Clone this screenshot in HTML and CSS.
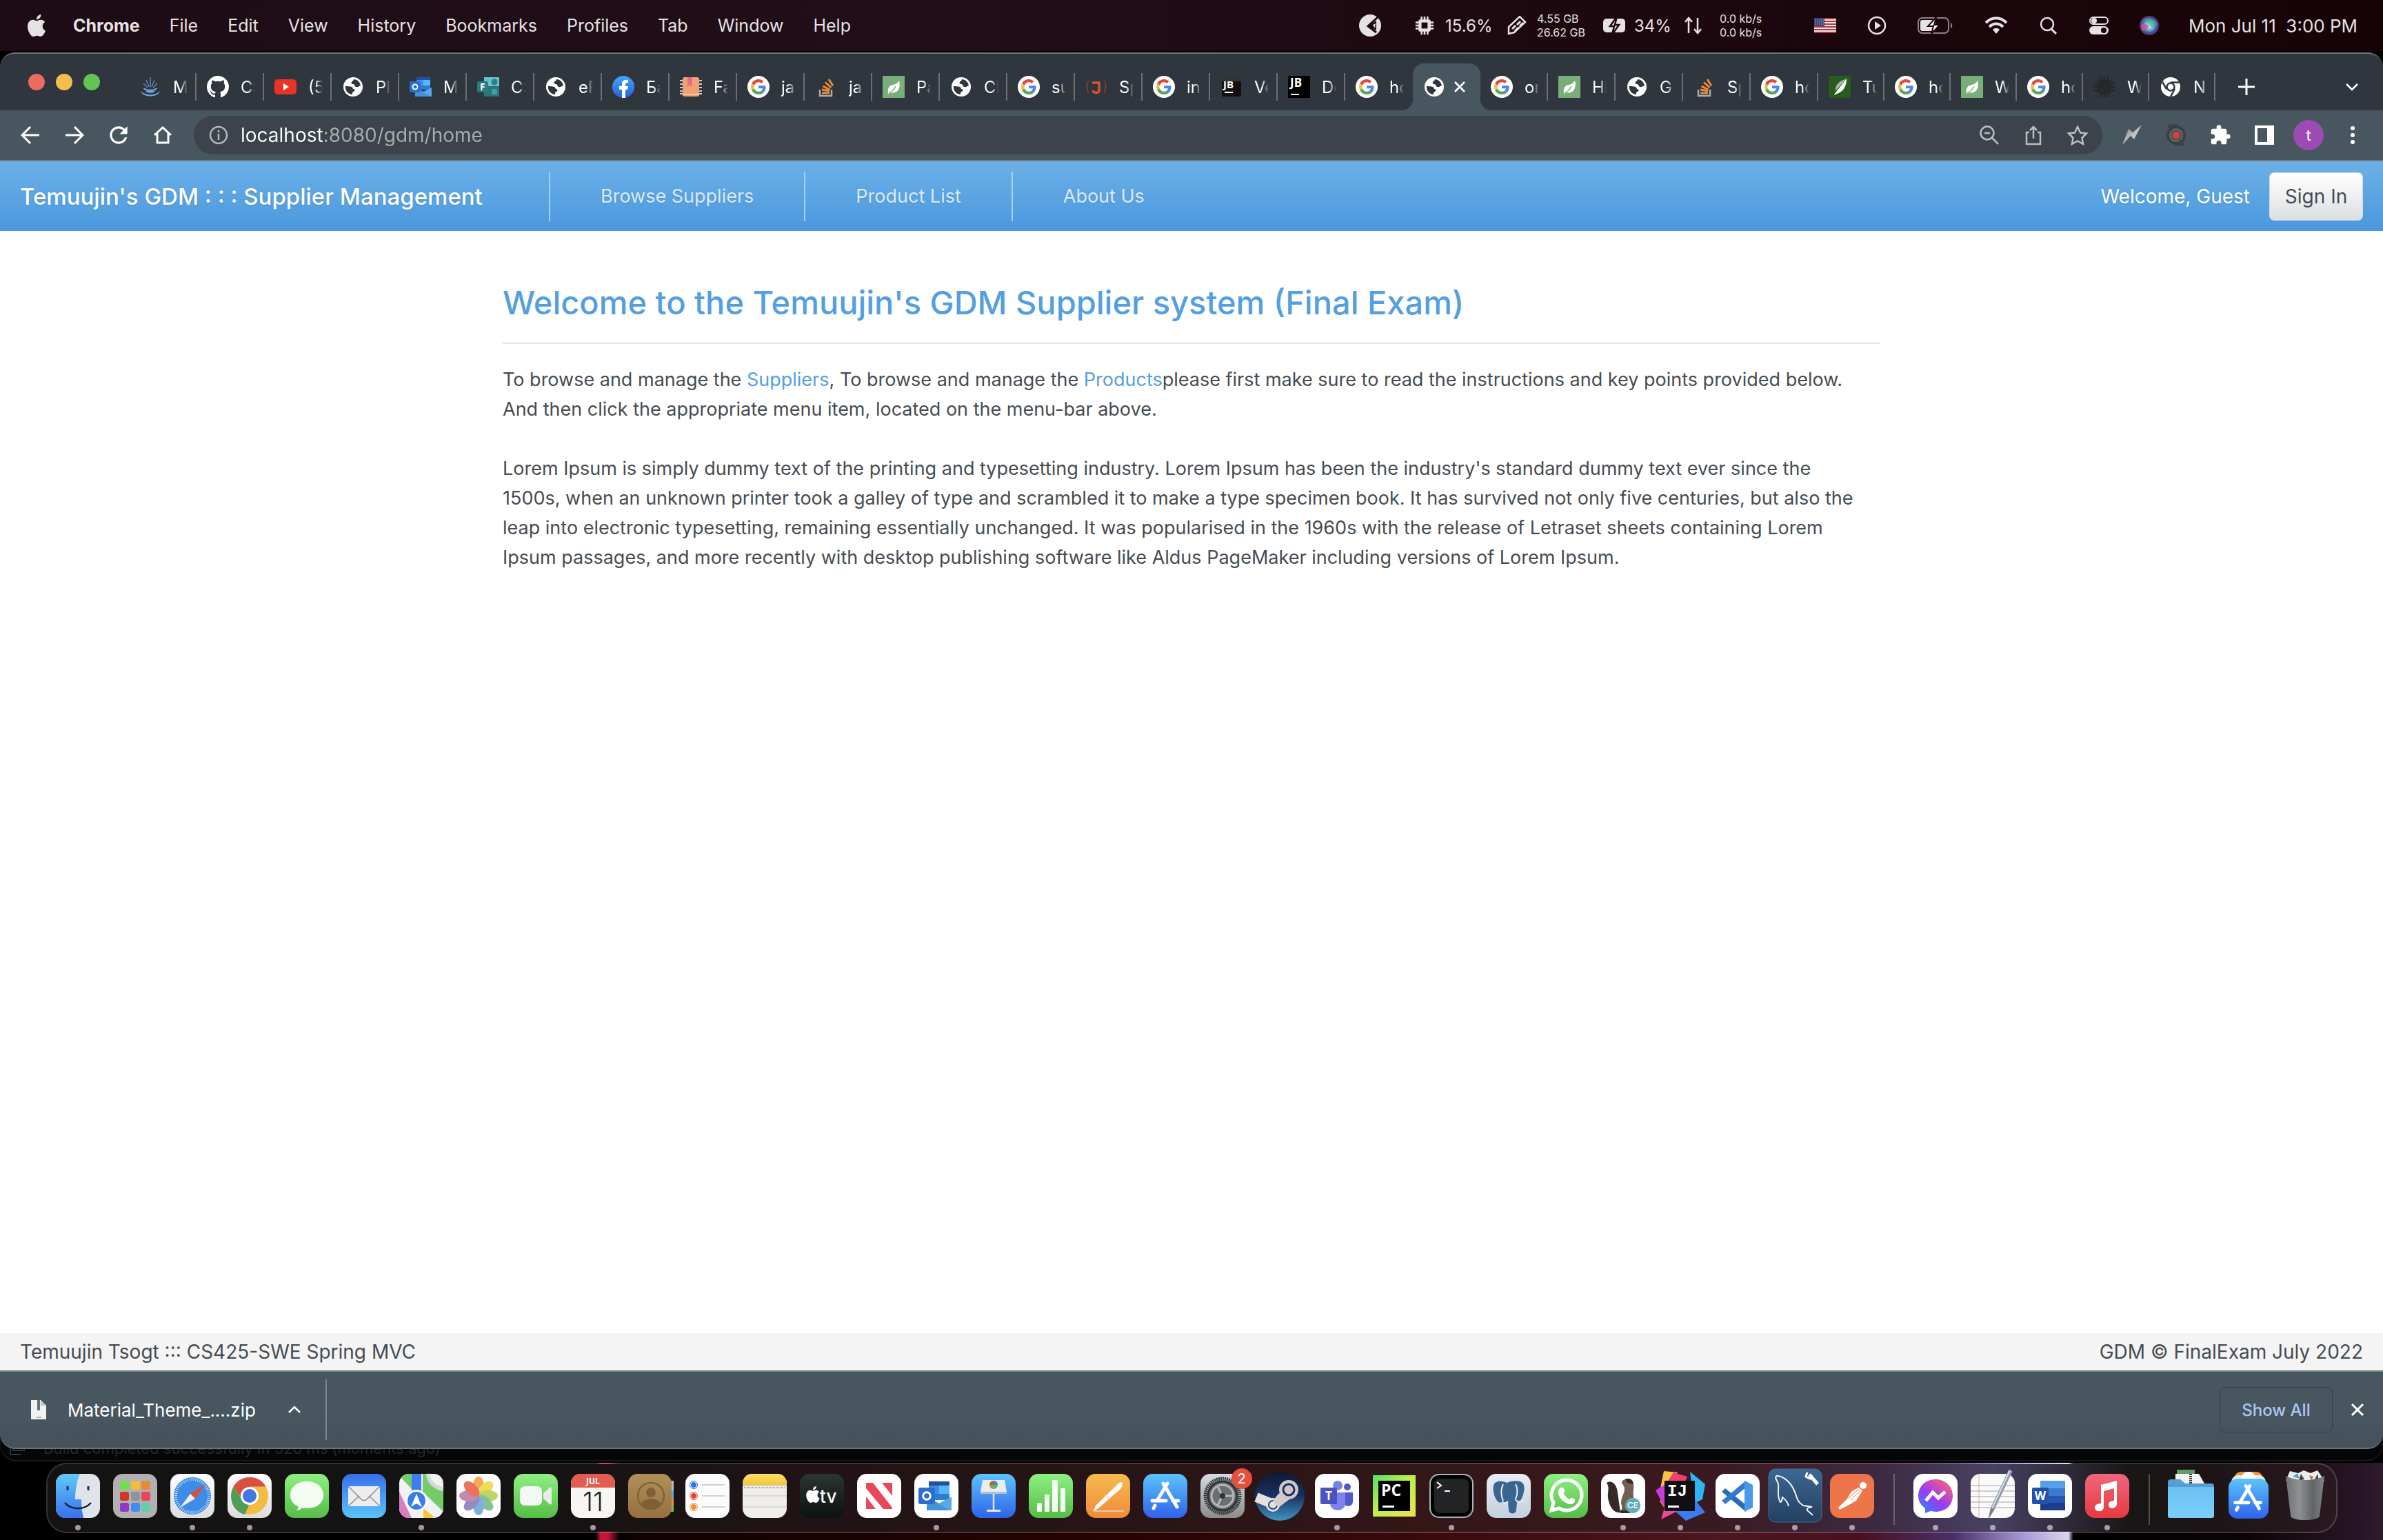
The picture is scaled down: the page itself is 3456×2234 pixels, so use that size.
FILE: index.html
```html
<!DOCTYPE html>
<html lang="en">
<head>
<meta charset="utf-8">
<title>GDM Supplier Management</title>
<link rel="stylesheet" href="styles.css">
</head>
<body>
<svg class="defs" aria-hidden="true">
  <defs>
    <linearGradient id="g-green" x2="0" y2="1"><stop stop-color="#8ef082"/><stop offset="1" stop-color="#55bd47"/></linearGradient>
    <linearGradient id="g-blue" x2="0" y2="1"><stop stop-color="#5cc4fb"/><stop offset="1" stop-color="#2f62ea"/></linearGradient>
    <linearGradient id="g-mail" x2="0" y2="1"><stop stop-color="#3870ea"/><stop offset="1" stop-color="#5ac3f8"/></linearGradient>
    <linearGradient id="g-white" x2="0" y2="1"><stop stop-color="#fff"/><stop offset="1" stop-color="#dcdcdc"/></linearGradient>
    <linearGradient id="g-orange" x2="0" y2="1"><stop stop-color="#f6bb4d"/><stop offset="1" stop-color="#ef8b3a"/></linearGradient>
    <linearGradient id="g-red" x2="0" y2="1"><stop stop-color="#f0667c"/><stop offset="1" stop-color="#e63a3e"/></linearGradient>
    <linearGradient id="g-yellow" x2="0" y2="1"><stop stop-color="#fbe06c"/><stop offset="1" stop-color="#f5c533"/></linearGradient>
    <linearGradient id="g-finder" x2="0" y2="1"><stop stop-color="#5fcaf8"/><stop offset="1" stop-color="#3a6ff0"/></linearGradient>
    <linearGradient id="g-brown" x2="0" y2="1"><stop stop-color="#b09059"/><stop offset="1" stop-color="#97703f"/></linearGradient>
    <linearGradient id="g-tv" x2="0" y2="1"><stop stop-color="#2b3632"/><stop offset="1" stop-color="#0c1012"/></linearGradient>
    <linearGradient id="g-grey" x2="0" y2="1"><stop stop-color="#d3dde2"/><stop offset="1" stop-color="#8d8c8a"/></linearGradient>
    <linearGradient id="g-steam" x2="0" y2="1"><stop stop-color="#10192b"/><stop offset=".5" stop-color="#183163"/><stop offset="1" stop-color="#4194c0"/></linearGradient>
    <linearGradient id="g-pc" x2="1" y2="1"><stop stop-color="#52e06a"/><stop offset=".45" stop-color="#b9f04c"/><stop offset="1" stop-color="#f0e050"/></linearGradient>
    <linearGradient id="g-pg" x2="0" y2="1"><stop stop-color="#e9edf2"/><stop offset="1" stop-color="#c3d0de"/></linearGradient>
    <linearGradient id="g-mysql" x2="0" y2="1"><stop stop-color="#3c6796"/><stop offset="1" stop-color="#23405e"/></linearGradient>
    <linearGradient id="g-msgr" x1="0" y1="1" x2=".8" y2="0"><stop stop-color="#1f8dff"/><stop offset=".5" stop-color="#9a3bf5"/><stop offset="1" stop-color="#f9617a"/></linearGradient>
    <linearGradient id="g-trash"><stop stop-color="#6e7274"/><stop offset=".35" stop-color="#8d9192"/><stop offset=".7" stop-color="#5f6466"/><stop offset="1" stop-color="#808486"/></linearGradient>
    <linearGradient id="g-folder" x2="0" y2="1"><stop stop-color="#6cc1f2"/><stop offset="1" stop-color="#7ccdfb"/></linearGradient>
    <linearGradient id="g-fb" x2="0" y2="1"><stop stop-color="#42a5f8"/><stop offset="1" stop-color="#2960dd"/></linearGradient>
    <linearGradient id="g-bolt" x2="1" y2="1"><stop stop-color="#777"/><stop offset=".6" stop-color="#c8c8c8"/><stop offset="1" stop-color="#777"/></linearGradient>
    <radialGradient id="g-siri"><stop stop-color="#f0fbff"/><stop offset=".45" stop-color="#65b8d8"/><stop offset=".8" stop-color="#3b4d92"/><stop offset="1" stop-color="#6d2b66"/></radialGradient>
  </defs>
  <symbol id="google" viewBox="0 0 32 32"><circle cx="16" cy="16" r="16" fill="#fff"/><g transform="translate(5 5) scale(.46)"><path fill="#dd4b3e" d="M24 9.500c3.540 0 6.710 1.220 9.210 3.600l6.850-6.850C35.900 2.380 30.470 0 24 0 14.620 0 6.510 5.380 2.560 13.220l7.980 6.190C12.430 13.720 17.740 9.500 24 9.500z"/><path fill="#5086ec" d="M46.980 24.550c0-1.570-.15-3.090-.38-4.550H24v9.020h12.940c-.58 2.960-2.260 5.480-4.780 7.180l7.730 6c4.510-4.180 7.090-10.360 7.090-17.650z"/><path fill="#f2bd42" d="M10.530 28.590c-.48-1.450-.76-2.990-.76-4.590s.27-3.140.76-4.590l-7.980-6.190C.92 16.460 0 20.120 0 24c0 3.880.92 7.540 2.560 10.780l7.970-6.190z"/><path fill="#58a65c" d="M24 48c6.480 0 11.930-2.130 15.890-5.810l-7.730-6c-2.150 1.450-4.920 2.300-8.160 2.300-6.260 0-11.570-4.220-13.470-9.910l-7.980 6.190C6.510 42.620 14.620 48 24 48z"/></g></symbol>
  <symbol id="globe" viewBox="0 0 32 32"><circle cx="16" cy="16" r="14" fill="#fff"/><path fill="#2f363d" d="M17 5c5 0 9 4 10 9-3 1-4 3-7 2-2-1-1-4-4-4-2 0-3-1-2-3 0-2 3-1 3-4zM5 15c3 0 6 0 9 1 2 1 1 3 3 3 2 1 2 3 0 4-2 0-2 2-2 4C9 27 4 21 5 15z"/></symbol>
  <symbol id="stack" viewBox="0 0 32 32"><path fill="none" stroke="#a7abb0" stroke-width="2.500" d="M7 20v9h17v-9"/><path stroke="#e98b3a" stroke-width="3" fill="none" d="M10 25h11M10 20l11 2M11.500 15l10 5M15 9.500l8.500 7.500M20 5l6 9.500"/></symbol>
  <symbol id="spring" viewBox="0 0 32 32"><path fill="#77ae7a" d="M0 0h32v32H0z"/><path fill="#fff" d="M24 7c2 8 0 15-6 17-3 1-6 0-7 1l-3 1c-1-8 1-12 8-13 4-1 6-3 8-6z"/><path d="M9 25c5-2 8-6 10-10" stroke="#77ae7a" stroke-width="1.500" fill="none"/></symbol>
  <symbol id="outlook" viewBox="0 0 32 32"><path fill="#2450a0" d="M10 2h20v9H10z"/><path fill="#3b8ee4" d="M10 6h10v14H10z"/><path fill="#55b8f8" d="M20 6h10v8H20z"/><path fill="#2f7bd0" d="M10 14h20v6H10z"/><path fill="#56a8e8" d="M8 17l12 6 12-6v13H8z"/><path fill="#4592dc" d="M8 17l22 13H8z"/><rect y="8" width="16" height="16" rx="2" fill="#2c6dd0"/><circle cx="8" cy="16" r="3.500" fill="none" stroke="#fff" stroke-width="2"/></symbol>
  <symbol id="chip" viewBox="0 0 32 32"><rect x="6" y="6" width="20" height="20" rx="3" fill="currentColor"/><path stroke="currentColor" stroke-width="3" d="M11 1v30M16 1v30M21 1v30M1 11h30M1 16h30M1 21h30"/></symbol>
  <symbol id="appstore-a" viewBox="0 0 64 64"><g stroke="#fff" stroke-width="5" stroke-linecap="round"><path d="M35 14L20 39M29 14l20 34M13 39h20M43 39h8M17 46l-2 4"/></g></symbol>
  <symbol id="apple" viewBox="0 0 24 24"><path fill="currentColor" d="M12.152 6.896c-.948 0-2.415-1.078-3.960-1.040-2.040.027-3.910 1.183-4.961 3.014-2.117 3.675-.546 9.103 1.519 12.090 1.013 1.454 2.208 3.090 3.792 3.039 1.520-.065 2.090-.987 3.935-.987 1.831 0 2.350.987 3.960.948 1.637-.026 2.676-1.480 3.676-2.948 1.156-1.688 1.636-3.325 1.662-3.415-.039-.013-3.182-1.221-3.220-4.857-.026-3.040 2.480-4.494 2.597-4.559-1.429-2.090-3.623-2.324-4.390-2.376-2-.156-3.675 1.090-4.610 1.090zM15.530 3.830c.843-1.012 1.400-2.427 1.245-3.830-1.207.052-2.662.805-3.532 1.818-.78.896-1.454 2.338-1.273 3.714 1.338.104 2.715-.688 3.559-1.701"/></symbol>
</svg>

<header class="menubar">
  <nav class="menus" aria-label="Menu bar">
    <button class="menu-apple" aria-label="Apple menu"><svg width="32" height="32"><use href="#apple"/></svg></button>
    <button class="menu menu-app">Chrome</button>
    <button class="menu">File</button>
    <button class="menu">Edit</button>
    <button class="menu">View</button>
    <button class="menu">History</button>
    <button class="menu">Bookmarks</button>
    <button class="menu">Profiles</button>
    <button class="menu">Tab</button>
    <button class="menu">Window</button>
    <button class="menu">Help</button>
  </nav>
  <div class="status">
    <svg width="32" height="32" viewBox="0 0 32 32"><circle cx="16" cy="16" r="16" fill="#e6e1e3"/><path d="M27 4L13 17l12 9M22 13l-2 7" stroke="#1d0a12" stroke-width="3" fill="none"/><path d="M13 17l12-8v14z" fill="#1d0a12"/><path d="M20 15l4-2-1 7z" fill="#e6e1e3"/></svg>
    <div class="metrics">
      <div class="metric"><svg width="30" height="28" viewBox="0 0 32 32"><use href="#chip"/><rect x="11" y="11" width="10" height="10" fill="#1d0a12"/></svg><span class="metric-value">15.6%</span></div>
      <div class="metric"><svg width="28" height="28" viewBox="0 0 28 28"><path d="M2 26V16L18 1l8 8L10 24z" fill="#1d0a12" stroke="#e6e1e3" stroke-width="2.500"/><path d="M7 19l5-5M14 13l5-5M11 22l5-5M18 15l5-5" stroke="#e6e1e3" stroke-width="3"/></svg><span class="metric-pair metric-ram"><span>4.55 GB</span><span>26.62 GB</span></span></div>
      <div class="metric metric-tight"><svg width="34" height="24" viewBox="0 0 34 24"><rect x="1" y="2" width="32" height="20" rx="5" fill="#e6e1e3"/><path d="M21-1L11 13h6l-3 12 10-14h-6z" fill="#e6e1e3" stroke="#1d0a12" stroke-width="2.500"/></svg><span class="metric-value">34%</span></div>
      <div class="metric metric-net"><svg width="27" height="26" viewBox="0 0 27 26"><path d="M7 24V3M2 8l5-6 5 6M20 2v21M15 18l5 6 5-6" stroke="#e6e1e3" stroke-width="2.500" fill="none"/></svg><span class="metric-pair"><span>0.0 kb/s</span><span>0.0 kb/s</span></span></div>
    </div>
    <div class="tray">
      <svg width="32" height="22" viewBox="0 0 32 22"><path fill="#ece8ea" d="M0 0h32v22H0z"/><path stroke="#b33a43" stroke-width="2" d="M0 1h32M0 5h32M0 9h32M0 13h32M0 17h32M0 21h32"/><path fill="#3c4576" d="M0 0h15v12H0z"/><path stroke="#b9bdd0" stroke-dasharray="1 2" d="M1 3h13M1 6h13M1 9h13"/></svg>
      <svg width="28" height="28" viewBox="0 0 28 28"><circle cx="14" cy="14" r="12" fill="none" stroke="#e6e1e3" stroke-width="2.500"/><path fill="#e6e1e3" d="M11 8l9 6-9 6z"/></svg>
      <svg width="52" height="26" viewBox="0 0 52 26"><rect x="1" y="2" width="44" height="22" rx="6" fill="none" stroke="#8c8386" stroke-width="2"/><path d="M48 9v8c3-1 3-7 0-8z" fill="#8c8386"/><rect x="4" y="5" width="22" height="16" rx="3" fill="#e6e1e3"/><path d="M27 1L15 14h8l-3 11 12-13h-8z" fill="#fff" stroke="#1a060b" stroke-width="2"/></svg>
      <svg width="34" height="26" viewBox="0 0 34 26"><path d="M2 9c9-9 21-9 30 0M7 15c6-6 14-6 20 0" stroke="#e6e1e3" stroke-width="4" fill="none"/><path d="M17 25l-5-6c3-3 7-3 10 0z" fill="#e6e1e3"/></svg>
      <svg width="28" height="28" viewBox="0 0 28 28"><circle cx="12" cy="12" r="9" fill="none" stroke="#e6e1e3" stroke-width="2.500"/><path d="M18 19l7 7" stroke="#e6e1e3" stroke-width="3"/></svg>
      <svg width="28" height="28" viewBox="0 0 28 28"><rect x="1" y="2" width="26" height="10" rx="5" fill="none" stroke="#e6e1e3" stroke-width="2"/><circle cx="7" cy="7" r="4" fill="#e6e1e3"/><rect y="15" width="28" height="12" rx="6" fill="#e6e1e3"/><circle cx="21" cy="21" r="4" fill="#1a060b"/></svg>
      <svg width="28" height="28" viewBox="0 0 28 28"><circle cx="14" cy="14" r="14" fill="url(#g-siri)"/><path d="M2 12c5-9 8-2 12 2s9 4 12-2C24 3 4-2 2 12z" fill="#3fae93" opacity=".6"/><path d="M2 14c3-4 8-2 12 0-2 5-6 8-9 8-2-2-3-5-3-8z" fill="#d6508e" opacity=".8"/></svg>
      <time class="clock">Mon Jul 11&nbsp; 3:00 PM</time>
    </div>
  </div>
</header>

<div class="browser">
  <div class="tabstrip">
    <div class="lights"><button class="light close" aria-label="Close"></button><button class="light minimise" aria-label="Minimise"></button><button class="light zoom" aria-label="Zoom"></button></div>
    <div class="tabs">
      <button class="tab"><svg class="fav" viewBox="0 0 32 32"><path d="M16 2v14M10 6l4 10M22 6l-4 10M6 11l6 6M26 11l-6 6" stroke="#5a88b8" stroke-width="1.500"/><path d="M7 18c2 4 16 4 18 0M10 22c3 2 9 2 12 0" stroke="#6ea4e0" stroke-width="2.500" fill="none"/><path d="M2 22c2 10 26 10 28 0-6 7-22 7-28 0z" fill="#6ea4e0"/></svg><span>M</span></button>
      <button class="tab"><svg class="fav" viewBox="0 0 16 16"><path fill="#fff" d="M8 0C3.580 0 0 3.580 0 8c0 3.540 2.290 6.530 5.470 7.590.4.070.55-.17.55-.38 0-.19-.01-.82-.01-1.490-2.010.37-2.530-.49-2.690-.94-.09-.23-.48-.94-.82-1.130-.28-.15-.68-.52-.01-.53.63-.01 1.080.58 1.230.82.72 1.210 1.870.87 2.330.66.070-.52.28-.87.51-1.070-1.780-.2-3.640-.89-3.640-3.950 0-.87.31-1.590.82-2.150-.08-.2-.36-1.020.080-2.120 0 0 .67-.21 2.200.82.64-.18 1.320-.27 2-.27s1.360.090 2 .27c1.530-1.040 2.200-.82 2.200-.82.44 1.100.16 1.920.080 2.120.51.56.82 1.270.82 2.150 0 3.070-1.870 3.750-3.650 3.950.29.25.54.73.54 1.480 0 1.070-.01 1.930-.01 2.200 0 .21.15.46.55.38A8.010 8.010 0 0 0 16 8c0-4.420-3.580-8-8-8z"/></svg><span>CS</span></button>
      <button class="tab"><svg class="fav" viewBox="0 0 32 32"><rect y="5" width="32" height="22" rx="5" fill="#e93323"/><path fill="#fff" d="M13 11l8 5-8 5z"/></svg><span>(5</span></button>
      <button class="tab"><svg class="fav"><use href="#globe"/></svg><span>Pl</span></button>
      <button class="tab"><svg class="fav"><use href="#outlook"/></svg><span>M</span></button>
      <button class="tab"><svg class="fav" viewBox="0 0 32 32"><path fill="#2f7377" d="M10 2h22v28H10z"/><path fill="#64c3cf" d="M10 2h22v13H10z"/><circle cx="25" cy="9" r="4.500" fill="#2f7e86"/><path fill="#3fa0a4" d="M21 19h8v8h-8z"/><rect y="8" width="16" height="16" rx="2" fill="#2a7b80"/><text x="4" y="21" class="glyph" font-size="14" fill="#fff">F</text></svg><span>CS</span></button>
      <button class="tab"><svg class="fav"><use href="#globe"/></svg><span>eR</span></button>
      <button class="tab"><svg class="fav" viewBox="0 0 32 32"><circle cx="16" cy="16" r="16" fill="url(#g-fb)"/><path fill="#fff" d="M14 32V20h-4v-5h4v-3c0-5 3-7 9-6v4c-4 0-4 1-4 5h4l-1 5h-3v12z"/></svg><span>Ба</span></button>
      <button class="tab"><svg class="fav" viewBox="0 0 32 32"><path stroke="#fff" stroke-width="1.500" d="M0 7h32M0 12h32M0 17h32M0 22h32M0 26h32"/><rect x="4" y="2" width="24" height="28" rx="3" fill="#f0a071"/><path fill="#e46c8c" d="M11 2h7v14l-4-3-3 3z"/><path fill="#f5cf8e" d="M4 26h24v2H4z"/></svg><span>Fa</span></button>
      <button class="tab"><svg class="fav"><use href="#google"/></svg><span>ja</span></button>
      <button class="tab"><svg class="fav"><use href="#stack"/></svg><span>ja</span></button>
      <button class="tab"><svg class="fav"><use href="#spring"/></svg><span>Pa</span></button>
      <button class="tab"><svg class="fav"><use href="#globe"/></svg><span>Cl</span></button>
      <button class="tab"><svg class="fav"><use href="#google"/></svg><span>su</span></button>
      <button class="tab"><svg class="fav" viewBox="0 0 32 32"><path d="M5 8c-3 0-1 6-3 8 2 2 0 8 3 8M27 8c3 0 1 6 3 8-2 2 0 8-3 8" stroke="#8a4238" stroke-width="1.500" fill="none"/><path d="M10 10h10v12c0 3-8 4-9-1" stroke="#d9532c" stroke-width="3.500" fill="none"/></svg><span>Sp</span></button>
      <button class="tab"><svg class="fav"><use href="#google"/></svg><span>in</span></button>
      <button class="tab"><svg class="fav" viewBox="0 0 32 32"><path fill="#111" d="M2 2h28v28H2z"/><path fill="#333" d="M2 2h28v6H2z"/><text x="4" y="18" class="glyph" font-size="15" fill="#fff">JB</text><path fill="#fff" d="M6 23h12v2H6z"/></svg><span>Ve</span></button>
      <button class="tab"><svg class="fav" viewBox="0 0 32 32"><path d="M0 0h32v32H0z"/><text x="3" y="16" class="glyph" font-size="17" fill="#fff">JB</text><path fill="#fff" d="M4 26h12v2H4z"/></svg><span>Do</span></button>
      <button class="tab tab-before"><svg class="fav"><use href="#google"/></svg><span>ho</span></button>
      <button class="tab tab-active" aria-label="GDM"><svg class="fav"><use href="#globe"/></svg><svg width="20" height="20" viewBox="0 0 20 20"><path d="M3 3l14 14M17 3L3 17" stroke="#fff" stroke-width="2.500"/></svg></button>
      <button class="tab"><svg class="fav"><use href="#google"/></svg><span>or</span></button>
      <button class="tab"><svg class="fav"><use href="#spring"/></svg><span>Hi</span></button>
      <button class="tab"><svg class="fav"><use href="#globe"/></svg><span>G</span></button>
      <button class="tab"><svg class="fav"><use href="#stack"/></svg><span>Sp</span></button>
      <button class="tab"><svg class="fav"><use href="#google"/></svg><span>ho</span></button>
      <button class="tab tab-slim"><svg class="fav" viewBox="0 0 32 32"><rect width="32" height="32" rx="3" fill="#285c1e"/><path fill="#fff" d="M26 4c0 12-5 19-14 22l-4 2c1-3 2-4 4-6z"/><path fill="#a9b8a4" d="M26 4C16 8 9 12 10 22z"/></svg><span>Tu</span></button>
      <button class="tab tab-slim"><svg class="fav"><use href="#google"/></svg><span>ho</span></button>
      <button class="tab tab-slim"><svg class="fav"><use href="#spring"/></svg><span>W</span></button>
      <button class="tab tab-slim"><svg class="fav"><use href="#google"/></svg><span>ho</span></button>
      <button class="tab tab-slim"><svg class="fav fav-dark"><use href="#chip"/></svg><span>W</span></button>
      <button class="tab tab-slim"><svg class="fav" viewBox="0 0 32 32"><circle cx="16" cy="16" r="14" fill="#fff"/><circle cx="16" cy="16" r="5.500" fill="#fff" stroke="#2f363d" stroke-width="2.500"/><path d="M16 9.500h13M10 19L4 9M22 19l-6 11" stroke="#2f363d" stroke-width="2.500"/></svg><span>N</span></button>
    </div>
    <button class="newtab" aria-label="New tab"><svg width="26" height="26" viewBox="0 0 26 26"><path d="M13 1v24M1 13h24" stroke="#fff" stroke-width="3"/></svg></button>
    <button class="tabsearch" aria-label="Search tabs"><svg width="20" height="12" viewBox="0 0 20 12"><path d="M2 2l8 8 8-8" stroke="#fff" stroke-width="2.500" fill="none"/></svg></button>
  </div>

  <div class="toolbar">
    <div class="navbuttons">
      <button class="tool" aria-label="Back"><svg width="28" height="28" viewBox="0 0 28 28"><path d="M27 14H3M14 2L2 14l12 12" stroke="#fff" stroke-width="3" fill="none"/></svg></button>
      <button class="tool" aria-label="Forward"><svg width="28" height="28" viewBox="0 0 28 28"><path d="M1 14h24M14 2l12 12-12 12" stroke="#fff" stroke-width="3" fill="none"/></svg></button>
      <button class="tool" aria-label="Reload"><svg width="38" height="38" viewBox="0 0 24 24"><path fill="#fff" d="M17.650 6.350A7.958 7.958 0 0 0 12 4c-4.420 0-7.990 3.580-7.990 8s3.570 8 7.990 8c3.730 0 6.840-2.550 7.730-6h-2.080A5.990 5.990 0 0 1 12 18c-3.310 0-6-2.690-6-6s2.690-6 6-6c1.660 0 3.140.69 4.220 1.780L13 11h7V4l-2.350 2.350z"/></svg></button>
      <button class="tool" aria-label="Home"><svg width="28" height="28" viewBox="0 0 28 28"><path d="M2 14L14 3l12 11M6 11v14h16V11" stroke="#fff" stroke-width="3" fill="none"/></svg></button>
    </div>
    <div class="omnibox">
      <svg width="28" height="28" viewBox="0 0 28 28"><circle cx="14" cy="14" r="12" fill="none" stroke="#b4b8ba" stroke-width="2.500"/><path d="M14 12v9M14 7v3" stroke="#b4b8ba" stroke-width="2.500"/></svg>
      <input class="url" type="text" aria-label="Address" value="localhost:8080/gdm/home">
      <button class="tool" aria-label="Zoom"><svg width="30" height="30" viewBox="0 0 30 30"><circle cx="12" cy="12" r="9.500" fill="none" stroke="#bcbfc1" stroke-width="2.500"/><path d="M8 12h8M19 19l9 9" stroke="#bcbfc1" stroke-width="2.500"/></svg></button>
      <button class="tool" aria-label="Share"><svg width="30" height="30" viewBox="0 0 30 30"><path d="M9 11H5v17h20V11h-4M15 20V3M10 8l5-5 5 5" stroke="#bcbfc1" stroke-width="2.500" fill="none"/></svg></button>
      <button class="tool" aria-label="Bookmark"><svg width="32" height="32" viewBox="0 0 32 32"><path d="M16 4l4 8.500 9 1-6.500 6.500 1.500 9-8-4.500L8 29l1.500-9L3 13.500l9-1z" stroke="#bcbfc1" stroke-width="2.500" fill="none"/></svg></button>
    </div>
    <div class="extensions">
      <button class="tool" aria-label="Extension"><svg width="30" height="30" viewBox="0 0 30 30"><path d="M29 0L18 21l-5-5L1 29 10 6l6 5z" fill="url(#g-bolt)"/></svg></button>
      <button class="tool" aria-label="Recorder"><svg width="32" height="32" viewBox="0 0 32 32"><circle cx="16" cy="16" r="12" fill="none" stroke="#3d3f40" stroke-width="4"/><circle cx="16" cy="16" r="9" fill="none" stroke="#6c6f70" stroke-width="1.500"/><path d="M5 2h13M14 30h13M5 3l5 6M27 30l-6-7" stroke="#3d3f40" stroke-width="3"/><circle cx="16" cy="16" r="5" fill="#e9392a"/></svg></button>
      <button class="tool" aria-label="Extensions"><svg width="32" height="32" viewBox="0 0 24 24"><path fill="#fff" d="M20.500 11H19V7c0-1.100-.9-2-2-2h-4V3.500a2.500 2.500 0 0 0-5 0V5H4c-1.100 0-1.990.9-1.990 2v3.800H3.500c1.490 0 2.700 1.210 2.700 2.700s-1.210 2.700-2.700 2.700H2V20c0 1.100.9 2 2 2h3.800v-1.500c0-1.490 1.210-2.700 2.700-2.700s2.700 1.210 2.700 2.700V22H17c1.100 0 2-.9 2-2v-4h1.500a2.500 2.500 0 0 0 0-5z"/></svg></button>
      <button class="tool" aria-label="Side panel"><svg width="28" height="28" viewBox="0 0 28 28"><path fill="#fff" fill-rule="evenodd" d="M0 0h28v28H0zM4 4v20h14V4z"/></svg></button>
      <button class="tool avatar" aria-label="Profile">t</button>
      <button class="tool" aria-label="More"><svg width="8" height="28" viewBox="0 0 8 28"><g fill="#fff"><circle cx="4" cy="4" r="3"/><circle cx="4" cy="14" r="3"/><circle cx="4" cy="24" r="3"/></g></svg></button>
    </div>
  </div>

  <div class="page">
    <header class="site-nav">
      <a class="brand" href="#">Temuujin's GDM : : : Supplier Management</a>
      <nav class="site-menu" aria-label="Site">
        <a href="#">Browse Suppliers</a>
        <a href="#">Product List</a>
        <a href="#">About Us</a>
      </nav>
      <div class="account"><span>Welcome, Guest</span><button class="signin">Sign In</button></div>
    </header>
    <main class="content">
      <h1>Welcome to the Temuujin's GDM Supplier system (Final Exam)</h1>
      <p>To browse and manage the <a href="#">Suppliers</a>, To browse and manage the <a href="#">Products</a>please first make sure to read the instructions and key points provided below.<br>And then click the appropriate menu item, located on the menu-bar above.</p>
      <p>Lorem Ipsum is simply dummy text of the printing and typesetting industry. Lorem Ipsum has been the industry's standard dummy text ever since the<br>1500s, when an unknown printer took a galley of type and scrambled it to make a type specimen book. It has survived not only five centuries, but also the<br>leap into electronic typesetting, remaining essentially unchanged. It was popularised in the 1960s with the release of Letraset sheets containing Lorem<br>Ipsum passages, and more recently with desktop publishing software like Aldus PageMaker including versions of Lorem Ipsum.</p>
    </main>
    <footer class="site-footer"><span>Temuujin Tsogt ::: CS425-SWE Spring MVC</span><span>GDM © FinalExam July 2022</span></footer>
  </div>

  <div class="downloads">
    <div class="download">
      <svg width="24" height="30" viewBox="0 0 24 30"><path fill="#f1f1f1" d="M1 1h14l8 8v20H1z"/><path fill="#c4c6c8" d="M15 1l8 8h-8z"/><path stroke="#6b6f72" stroke-width="4" d="M12 1v15"/><path stroke="#b3b5b6" stroke-width="2" d="M9 26h7"/></svg>
      <span class="filename">Material_Theme_....zip</span>
      <button class="plain" aria-label="Download options"><svg width="20" height="12" viewBox="0 0 20 12"><path d="M2 10l8-8 8 8" stroke="#fff" stroke-width="2.500" fill="none"/></svg></button>
    </div>
    <div class="download-actions">
      <button class="showall">Show All</button>
      <button class="plain" aria-label="Close"><svg width="20" height="20" viewBox="0 0 20 20"><path d="M2 2l16 16M18 2L2 18" stroke="#fff" stroke-width="3"/></svg></button>
    </div>
  </div>
</div>

<div class="behind"><svg width="24" height="24" viewBox="0 0 24 24"><path d="M6 2h16v14H6zM2 8v14h16" stroke="#303335" stroke-width="2" fill="none"/></svg><span>Build completed successfully in 520 ms (moments ago)</span></div>

<footer class="dockrow">
<ul class="dock">
  <li class="app running"><svg viewBox="0 0 64 64"><rect width="64" height="64" rx="14" fill="#dfe3ea"/><path fill="url(#g-finder)" d="M14 0h21c-5 11-7 25-7 37h9c0 10 1 19 3 27H14C6 64 0 58 0 50V14C0 6 6 0 14 0z"/><path d="M17 18v6M47 18v6" stroke="#18304c" stroke-width="3"/><path d="M13 42c10 11 28 11 38 0" stroke="#16202c" stroke-width="2.500" fill="none"/></svg></li>
  <li class="app"><svg viewBox="0 0 64 64"><rect width="64" height="64" rx="14" fill="#b1b1b3"/><g><rect x="10" y="10" width="13" height="13" rx="3" fill="#6fe04a"/><rect x="26" y="10" width="13" height="13" rx="3" fill="#f4bb3c"/><rect x="41" y="10" width="13" height="13" rx="3" fill="#e88a33"/><rect x="10" y="26" width="13" height="13" rx="3" fill="#d43326"/><rect x="26" y="26" width="13" height="13" rx="3" fill="#8e9499"/><rect x="41" y="26" width="13" height="13" rx="3" fill="#e8455c"/><rect x="10" y="42" width="13" height="13" rx="3" fill="#9038c8"/><rect x="26" y="42" width="13" height="13" rx="3" fill="#3d8df5"/><rect x="41" y="42" width="13" height="13" rx="3" fill="#62cfa9"/></g></svg></li>
  <li class="app running"><svg viewBox="0 0 64 64"><rect width="64" height="64" rx="14" fill="url(#g-white)"/><circle cx="32" cy="32" r="27" fill="#3f8ce8"/><circle cx="32" cy="32" r="24" fill="none" stroke="#cfe4fa" stroke-width="4" stroke-dasharray="1 2"/><path fill="#e24a3e" d="M51 15L36 36l-7-7z"/><path fill="#f1f1f4" d="M14 49l15-20 7 7z"/></svg></li>
  <li class="app running"><svg viewBox="0 0 64 64"><rect width="64" height="64" rx="14" fill="url(#g-white)"/><circle cx="32" cy="32" r="27" fill="#f2bc42"/><path fill="#519d55" d="M8.600 18.500L22 38l10 5-7 16C8 55 0 35 8.600 18.500z"/><path fill="#d94f41" d="M8.600 18.500C18 1 46 0 55.400 18.500H32L21 36z"/><circle cx="32" cy="32" r="13" fill="#fff"/><circle cx="32" cy="32" r="10" fill="#4079e4"/></svg></li>
  <li class="app"><svg viewBox="0 0 64 64"><rect width="64" height="64" rx="14" fill="url(#g-green)"/><path fill="#f4fbf3" d="M32 11c14 0 24 8 24 20S46 50 32 50c-3 0-5 0-7-1-2 3-5 4-8 4 2-2 3-4 2-6C12 44 8 38 8 31c0-12 10-20 24-20z"/></svg></li>
  <li class="app"><svg viewBox="0 0 64 64"><rect width="64" height="64" rx="14" fill="url(#g-mail)"/><rect x="9" y="18" width="46" height="29" rx="3" fill="#ededee"/><path d="M10 46l15-14M54 46L39 32M10 19l18 18c2 2 6 2 8 0l18-18" stroke="#8f8f92" stroke-width="1.500" fill="none"/></svg></li>
  <li class="app running"><svg viewBox="0 0 64 64"><rect width="64" height="64" rx="14" fill="#f0f1f4"/><path fill="#74cc69" d="M3 6C6 2 9 0 14 0h6v24zM42 0c2 16 10 24 22 25v30L34 26V0z"/><path fill="#d680c2" d="M0 26l18 38h-4C6 64 0 58 0 50z"/><path fill="#f3c73c" d="M35 64V50l16 13-5 1z"/><path fill="#3d7df0" d="M18 0h14v30H18z"/><path fill="none" stroke="#d5d7dc" stroke-width="5" d="M41 0c2 12 10 20 23 22"/><circle cx="25" cy="39" r="16" fill="#fff"/><circle cx="25" cy="39" r="13" fill="#3a7bf0"/><path fill="#fff" d="M25 29l8 19-8-5-8 5z"/></svg></li>
  <li class="app"><svg viewBox="0 0 64 64"><rect width="64" height="64" rx="14" fill="#fdfdfd"/><g opacity=".85"><ellipse cx="32" cy="18" rx="8" ry="14" fill="#f29b38"/><ellipse cx="32" cy="18" rx="8" ry="14" fill="#e9d93a" transform="rotate(45 32 32)"/><ellipse cx="32" cy="18" rx="8" ry="14" fill="#b3d04c" transform="rotate(90 32 32)"/><ellipse cx="32" cy="18" rx="8" ry="14" fill="#6db983" transform="rotate(135 32 32)"/><ellipse cx="32" cy="18" rx="8" ry="14" fill="#6aa3d8" transform="rotate(180 32 32)"/><ellipse cx="32" cy="18" rx="8" ry="14" fill="#8277bd" transform="rotate(225 32 32)"/><ellipse cx="32" cy="18" rx="8" ry="14" fill="#bd76a6" transform="rotate(270 32 32)"/><ellipse cx="32" cy="18" rx="8" ry="14" fill="#ea5a45" transform="rotate(315 32 32)"/></g></svg></li>
  <li class="app"><svg viewBox="0 0 64 64"><rect width="64" height="64" rx="14" fill="url(#g-green)"/><rect x="9" y="18" width="32" height="28" rx="7" fill="#f4f8f4"/><path fill="#e6eee6" d="M43 28l9-8c1-1 3 0 3 1v22c0 1-2 2-3 1l-9-8z"/></svg></li>
  <li class="app running"><svg viewBox="0 0 64 64"><rect width="64" height="64" rx="14" fill="#f7f6f5"/><path fill="#e25c52" d="M0 20v-6C0 6 6 0 14 0h36c8 0 14 6 14 14v6z"/><text x="32" y="15" class="glyph" font-size="12" fill="#fff" text-anchor="middle">JUL</text><text x="32" y="54" class="thin" font-size="38" fill="#222" text-anchor="middle">11</text></svg></li>
  <li class="app"><svg viewBox="0 0 64 64"><path fill="#b9b9b9" d="M60 10h6v14h-6z"/><path fill="#58abe0" d="M60 24h6v12h-6z"/><path fill="#ec8c37" d="M60 36h6v10h-6z"/><path fill="#62c55a" d="M60 46h6v9h-6z"/><rect width="63" height="64" rx="14" fill="url(#g-brown)"/><circle cx="33" cy="32" r="19" fill="none" stroke="#7b5b30" stroke-width="2"/><circle cx="33" cy="27" r="7" fill="#7f6036"/><path fill="#7f6036" d="M19 43c4-9 24-9 28 0-6 9-22 9-28 0z"/></svg></li>
  <li class="app"><svg viewBox="0 0 64 64"><rect width="64" height="64" rx="14" fill="#fbfbfb"/><g stroke="#c3c3c6" stroke-width="1.500"><path d="M24 16h33M24 32h33M24 48h33"/></g><g stroke="#fff" stroke-width="1"><circle cx="12" cy="16" r="4.500" fill="#2f74e8"/><circle cx="12" cy="32" r="4.500" fill="#e2463a"/><circle cx="12" cy="48" r="4.500" fill="#ea9232"/></g><g fill="none" stroke-width="1"><circle cx="12" cy="16" r="5.500" stroke="#2f74e8"/><circle cx="12" cy="32" r="5.500" stroke="#e2463a"/><circle cx="12" cy="48" r="5.500" stroke="#ea9232"/></g></svg></li>
  <li class="app"><svg viewBox="0 0 64 64"><rect width="64" height="64" rx="14" fill="#efeeed"/><path fill="url(#g-yellow)" d="M0 16v-2C0 6 6 0 14 0h36c8 0 14 6 14 14v2z"/><path stroke="#b8b5ae" stroke-width="1" d="M0 17h64"/><path stroke="#a8a59f" stroke-width="2" stroke-dasharray="1 1" d="M2 20h60"/><path stroke="#d3d2d0" stroke-width="1.500" d="M0 32h64M0 48h64"/></svg></li>
  <li class="app"><svg viewBox="0 0 64 64"><rect width="64" height="64" rx="14" fill="url(#g-tv)"/><svg x="7" y="18" width="24" height="24" color="#fff"><use href="#apple"/></svg><text x="29" y="42" class="label" font-size="26" fill="#fff">tv</text></svg></li>
  <li class="app"><svg viewBox="0 0 64 64"><rect width="64" height="64" rx="14" fill="#fff"/><path fill="#e9475c" d="M13 13h10l28 36v2H38L13 21zM36 13h15v19zM13 33l14 18H13z"/></svg></li>
  <li class="app running"><svg viewBox="0 0 64 64"><rect width="64" height="64" rx="14" fill="#fff"/><svg x="6" y="7" width="48" height="50"><use href="#outlook"/></svg></svg></li>
  <li class="app"><svg viewBox="0 0 64 64"><rect width="64" height="64" rx="14" fill="url(#g-blue)"/><path stroke="#dfe3ea" stroke-width="2.500" d="M32 28v26"/><path fill="#e9ecf1" d="M22 52h20v3H22zM16 9h32l3 17H13z"/><path fill="#b8c0cb" d="M13 26h38v3H13z"/><circle cx="32" cy="16" r="6" fill="#63b84e"/><path fill="#e1523e" d="M32 16v-6a6 6 0 0 0-6 6z"/><path fill="#3f86e8" d="M32 16h6a6 6 0 0 0-6-6z"/></svg></li>
  <li class="app"><svg viewBox="0 0 64 64"><rect width="64" height="64" rx="14" fill="url(#g-green)"/><g fill="#f8fcf7"><rect x="12" y="42" width="7" height="13" rx="1"/><rect x="23" y="30" width="7" height="25" rx="1"/><rect x="34" y="9" width="8" height="46" rx="1"/><rect x="46" y="21" width="7" height="34" rx="1"/></g></svg></li>
  <li class="app"><svg viewBox="0 0 64 64"><rect width="64" height="64" rx="14" fill="url(#g-orange)"/><path fill="#fbfbfa" d="M48 13c2-2 5-1 5 1 0 3-1 5-3 8L18 50l-8 5 4-9z"/><path d="M28 31l6 5M13 54h42" stroke="#e3dccf" stroke-width="1.500"/></svg></li>
  <li class="app"><svg viewBox="0 0 64 64"><rect width="64" height="64" rx="14" fill="url(#g-blue)"/><use href="#appstore-a"/></svg></li>
  <li class="app"><svg viewBox="0 0 64 64"><rect width="64" height="64" rx="14" fill="url(#g-grey)"/><circle cx="32" cy="32" r="25" fill="none" stroke="#333739" stroke-width="5" stroke-dasharray="2 1"/><circle cx="32" cy="32" r="21" fill="#6b6f71" stroke="#2d3133" stroke-width="3"/><circle cx="32" cy="32" r="16" fill="none" stroke="#b4b8ba" stroke-width="3"/><path d="M32 32L24 17M32 32h17M32 32l-8 15" stroke="#b4b8ba" stroke-width="3"/><circle cx="32" cy="32" r="4" fill="#303436"/></svg><span class="badge">2</span></li>
  <li class="app"><svg viewBox="0 0 64 64"><circle cx="32" cy="32" r="36" fill="url(#g-steam)"/><path stroke="#e6dfe0" stroke-width="14" d="M-2 34l22 9"/><circle cx="22" cy="45" r="10" fill="#e6dfe0"/><circle cx="22" cy="45" r="6" fill="none" stroke="#24477d" stroke-width="2"/><path fill="#d5ccce" d="M31 28l15 9-16 12-8-10z"/><circle cx="45" cy="23" r="14" fill="#cfc6c9"/><circle cx="45" cy="23" r="8" fill="#cfc6c9" stroke="#1a3160" stroke-width="3"/></svg></li>
  <li class="app running"><svg viewBox="0 0 64 64"><rect width="64" height="64" rx="14" fill="#fff"/><circle cx="33" cy="17" r="7" fill="#7b83eb"/><circle cx="47" cy="19" r="5" fill="#5059c9"/><path fill="#5059c9" d="M42 27h13v13c0 8-11 9-13 3z"/><path fill="#7b83eb" d="M22 27h22v16c0 13-22 13-22 0z"/><rect x="8" y="20" width="24" height="24" rx="2" fill="#4b53bc"/><text x="20" y="38" class="glyph" font-size="17" fill="#fff" text-anchor="middle">T</text></svg></li>
  <li class="app"><svg viewBox="0 0 64 64"><path fill="url(#g-pc)" d="M1 2h62v60H1z"/><path d="M9 10h46v44H9z"/><text x="13" y="32" class="glyph" font-size="23" fill="#fff">PC</text><path fill="#fff" d="M15 46h17v3H15z"/></svg></li>
  <li class="app running"><svg viewBox="0 0 64 64"><rect width="64" height="64" rx="14" fill="#a9b2b8"/><rect x="2" y="2" width="60" height="60" rx="12"/><rect x="7" y="7" width="50" height="50" rx="8" fill="#232425"/><path d="M11 12l6 5-6 4M22 25h8" stroke="#fff" stroke-width="2" fill="none"/></svg></li>
  <li class="app"><svg viewBox="0 0 64 64"><rect width="64" height="64" rx="14" fill="url(#g-pg)"/><path fill="#3a6590" d="M12 13c6-4 13-2 18 0 5-3 17-4 22 0 5 5 2 18-3 26l-5 2-1 12c-1 6-10 6-11 0l-1-13c-3 3-7 4-10 1-6 5-16-19-9-28z"/><path d="M24 15c-4 8-3 17 0 24M42 15c4 7 3 14 0 22 1 4 8 4 12 2M24 39c-3 3 3 5 7 1" stroke="#e6edf4" stroke-width="2" fill="none"/></svg></li>
  <li class="app"><svg viewBox="0 0 64 64"><rect width="64" height="64" rx="14" fill="url(#g-green)"/><path d="M11 53l3-11a22 22 0 1 1 8 8z" fill="none" stroke="#fff" stroke-width="5"/><path fill="#fff" d="M25 20c2-1 4 0 5 4 1 3-2 3-1 5 2 4 5 6 8 8 2 0 2-3 4-2 4 1 5 3 4 5-2 5-8 5-13 2-6-3-11-9-11-15 0-3 1-6 4-7z"/></svg></li>
  <li class="app running"><svg viewBox="0 0 64 64"><rect width="64" height="64" rx="14" fill="#fff"/><path fill="#372923" d="M8 13c8-5 15 3 16 14l4 29c-9 2-16-8-18-21-1-8 3-15-2-22z"/><path fill="#75604f" d="M30 12c2-6 15-7 17 3 1 8-1 10 0 18 2 12-2 21-8 23H28c2-4 3-7 1-13 0-10 5-14 5-21 0-4-3-6-4-10z"/><path fill="#372923" d="M35 8c6-3 12 1 12 7l-9-2zM28 53h14v4H28z"/><circle cx="46" cy="46" r="11" fill="#5fadb8"/><text x="46" y="50" class="label" font-size="12" fill="#fff" text-anchor="middle">CE</text></svg></li>
  <li class="app running"><svg viewBox="0 0 64 64"><path fill="#f6c344" d="M8-4l20 2-14 20-12 8z"/><path fill="#ec3f74" d="M22-2l20 6-6 14-28 2z"/><path fill="#2fb4f2" d="M46-3l22 18-4 22-12 6z"/><path fill="#3d7bf0" d="M52 36l16 20-28 12-16-14z"/><path fill="#f2724d" d="M8 30l-6 10 10 14z"/><path fill="#c83de0" d="M12 14L-4 24l12 22 4 4z"/><path fill="#ea4a9c" d="M10 46l-6 20 24-12z"/><path fill="#120f14" d="M9 10h44v44H9z"/><text x="13" y="32" class="mono" font-size="24" fill="#fff">IJ</text><path fill="#fff" d="M14 46h16v3H14z"/></svg></li>
  <li class="app running"><svg viewBox="0 0 64 64"><rect width="64" height="64" rx="14" fill="#fff"/><path fill="#2b69b8" d="M9 26l5-5 30 24v10z"/><path fill="#3379cf" d="M9 39l5 5 30-24V10z"/><path fill="#4a9ae8" d="M42 10l12 6v33l-12 6z"/></svg></li>
  <li class="app running"><svg viewBox="0 0 64 64"><rect x="-6" y="-7" width="77" height="77" rx="10" fill="url(#g-mysql)" stroke="#486f96"/><path d="M5 3c10 0 20 8 26 21 4 8 3 16 13 22l13 2c-6 1-8 2-7 5l8 7M5 3c-3 4 2 6 3 12 1 7-2 16 2 24 1 4 3 2 4-5 4 3 8 8 9 13" stroke="#eef4fa" stroke-width="2" fill="none"/><path d="M53 1l12 14" stroke="#fff" stroke-width="5"/><path d="M50-2l-2 6 6 3 3-5" stroke="#fff" stroke-width="3" fill="none"/></svg></li>
  <li class="app running"><svg viewBox="0 0 64 64"><rect width="64" height="64" rx="14" fill="#ee7549"/><circle cx="48" cy="17" r="5" fill="#fff"/><path fill="#fff" d="M41 20l6 4-9 15-14 8-10 5-2-3 13-13 6-10z"/><path d="M26 36l16-14M30 38l14-14" stroke="#ee7549" stroke-width="1"/></svg></li>
  <li class="divider"></li>
  <li class="app running"><svg viewBox="0 0 64 64"><rect width="64" height="64" rx="14" fill="#fff"/><path fill="url(#g-msgr)" d="M32 8c14 0 25 10 25 24S46 55 32 55l-7-1-8 3v-7C10 45 7 39 7 32 7 18 18 8 32 8z"/><path d="M18 39l10-12 8 8 10-9" stroke="#fff" stroke-width="5" fill="none"/></svg></li>
  <li class="app running"><svg viewBox="0 0 64 64"><rect width="64" height="64" rx="14" fill="#fafafa"/><path stroke="#bdbfc1" stroke-width="1.500" d="M0 17h64M0 25h64M0 33h64M0 41h64M0 49h64"/><path stroke="#e2a8a8" d="M12 0v64"/><path d="M58-5L32 50" stroke="#8d9aa6" stroke-width="6"/><path d="M57-5L31 50" stroke="#d8e0e6" stroke-width="2"/><path fill="#777f86" d="M29 49l6 2-10 16z"/></svg></li>
  <li class="app running"><svg viewBox="0 0 64 64"><rect width="64" height="64" rx="14" fill="#fff"/><path fill="#55a0e6" d="M18 10h36v12H18z"/><path fill="#3f78cf" d="M18 21h36v11H18z"/><path fill="#2856b4" d="M18 32h36v10H18z"/><path fill="#1e3d88" d="M18 42h36v11H18z"/><rect x="6" y="20" width="24" height="24" rx="2" fill="#2351ab"/><text x="18" y="38" class="glyph" font-size="17" fill="#fff" text-anchor="middle">W</text></svg></li>
  <li class="app running"><svg viewBox="0 0 64 64"><rect width="64" height="64" rx="14" fill="url(#g-red)"/><path fill="#fff" d="M23 16l23-6v33c0 9-12 9-12 2 0-4 3-6 8-6V21l-15 4v23c0 8-13 8-13 1 0-4 4-6 9-6z"/></svg></li>
  <li class="divider"></li>
  <li class="app"><svg viewBox="0 0 64 64"><path fill="#5e9d68" d="M12-6h26v16H12z"/><path fill="#f2f3f2" d="M10 0h34l8 14v8H10z"/><path stroke="#444" stroke-width="4" stroke-dasharray="2 1" d="M32 0v20"/><path fill="#519fd4" d="M-1 12c0-3 2-4 4-4h14l7 6h38c3 0 4 2 4 4v20H-1z"/><path fill="url(#g-folder)" d="M-1 19h67v42c0 2-1 3-3 3H2c-2 0-3-1-3-3z"/></svg></li>
  <li class="app"><svg viewBox="0 0 64 64"><rect x="12" y="-3" width="42" height="30" rx="10" fill="#eb9936"/><rect x="8" y="2" width="50" height="30" rx="10" fill="#e9ebee"/><circle cx="33" cy="8" r="11" fill="#fff"/><rect x="4" y="7" width="58" height="58" rx="13" fill="url(#g-blue)"/><svg x="1" y="4" width="62" height="62"><use href="#appstore-a"/></svg></svg></li>
  <li class="app"><svg viewBox="0 0 64 64"><path fill="#ebebeb" d="M4 10l6-14 12 3 8-4 10 4 10-4 10 15z"/><path fill="#5aa3c8" d="M14 4l7-5 3 8z"/><path fill="#c4733c" d="M38 2l6 2-3 6z"/><path fill="#444" d="M26 0l5 8-8 2zM50 0l2 9-6-1z"/><path fill="url(#g-trash)" d="M4 3c16 8 40 8 56 0l-7 58c-1 8-41 8-42 0z"/></svg></li>
</ul>
</footer>
</body>
</html>
```
FILE: styles.css
```css
* { box-sizing: border-box; }

body {
  margin: 0;
  min-height: 100vh;
  display: flex;
  flex-direction: column;
  font-family: Inter, "Liberation Sans", sans-serif;
  font-size: 28px;
  color: #464c52;
  background:
    linear-gradient(90deg, #000 0 25%, #c2163a 25.2% 25.5%, #050101 26%, #120203 27%, #240302 45%, #3a0a0c 60%, #4d1620 72%, #4a1020 78%, #4a3068 82%, #a99bd8 85%, #dcd4ec 86.8%, #000 87%, #0a0406 94%, #2e1a2c 100%) bottom / 100% 112px no-repeat,
    #000;
}

button {
  font: inherit;
  color: inherit;
  background: none;
  border: 0;
  padding: 0;
  margin: 0;
}

a { color: inherit; text-decoration: none; }
svg { display: block; flex: none; }

.defs { position: absolute; width: 0; height: 0; }
.glyph { font-family: "Open Sans", "Liberation Sans", sans-serif; font-weight: 700; }
.label { font-family: Inter, "Liberation Sans", sans-serif; font-weight: 500; }
.thin { font-family: Inter, "Liberation Sans", sans-serif; font-weight: 300; }
.mono { font-family: "Liberation Mono", monospace; font-weight: 700; }

/* System menu bar */
.menubar {
  display: flex;
  justify-content: space-between;
  align-items: center;
  height: 74px;
  padding: 0 32px 0 37px;
  margin-bottom: 2px;
  font-size: 25px;
  color: #e6e1e3;
  background: linear-gradient(90deg, #1d0b15, #210e18 40%, #1e0810 65%, #170307);
}

.menus { display: flex; align-items: center; gap: 43px; }
.menu-apple { margin-right: -6px; }
.menu-app { font-weight: 700; }

.status { display: flex; align-items: center; font-size: 26px; }
.metrics { display: flex; align-items: center; gap: 22px; margin: 0 74px 0 48px; }
.metric { display: flex; align-items: center; gap: 15px; }
.metric-value { width: 68px; font-size: 24px; }
.metric-tight { gap: 12px; }
.metric-tight .metric-value { width: 50px; }
.metric-net { gap: 25px; }
.metric-pair { display: flex; flex-direction: column; width: 63px; font-size: 16px; line-height: 20px; white-space: nowrap; }
.metric-ram { width: 73px; }
.tray { display: flex; align-items: center; gap: 45px; }
.clock { width: 250px; margin-left: -2px; white-space: nowrap; }

/* Browser window */
.browser {
  flex: 1;
  display: flex;
  flex-direction: column;
  position: relative;
  overflow: hidden;
  border: solid #6b777d;
  border-width: 2px 0;
  border-radius: 22px;
  background: #48565f;
}

.tabstrip {
  display: flex;
  align-items: flex-end;
  height: 82px;
  padding: 0 35px 0 41px;
  background: #2f363d;
}

.lights { display: flex; gap: 16px; width: 146px; height: 53px; }
.light { width: 24px; height: 24px; border-radius: 50%; }
.close { background: #ec6a5e; }
.minimise { background: #f4be4f; }
.zoom { background: #61c554; }

.tabs { display: flex; }

.tab {
  display: flex;
  align-items: center;
  position: relative;
  gap: 17px;
  width: 98px;
  height: 68px;
  padding-left: 15px;
  font-size: 24px;
  color: #fff;
  text-align: left;
  background: linear-gradient(#697074, #697074) right center / 2px 40px no-repeat;
}

.tab span {
  width: 21px;
  overflow: hidden;
  white-space: nowrap;
  mask-image: linear-gradient(90deg, #000 50%, transparent);
}

.tab-slim { width: 96px; }
.tab-before { background: none; }
.tab-active { gap: 11px; background: #48565f; border-radius: 16px 16px 0 0; }

.tab-active::before,
.tab-active::after {
  content: "";
  position: absolute;
  bottom: 0;
  width: 16px;
  height: 16px;
}

.tab-active::before { left: -16px; background: radial-gradient(circle at 0 0, transparent 16px, #48565f 16px); }
.tab-active::after { right: -16px; background: radial-gradient(circle at 100% 0, transparent 16px, #48565f 16px); }

.fav { width: 32px; height: 32px; }
.fav-dark { color: #25292c; }
.newtab { margin: 0 auto 21px 32px; }
.tabsearch { margin-bottom: 28px; }

.toolbar {
  display: flex;
  align-items: center;
  height: 74px;
  padding: 0 12px;
  border-bottom: 2px solid #6f7b80;
}

.navbuttons, .extensions { display: flex; align-items: center; }
.tool { display: flex; align-items: center; justify-content: center; width: 64px; height: 44px; flex: none; }

.omnibox {
  flex: 1;
  display: flex;
  align-items: center;
  height: 56px;
  margin: 0 11px 0 13px;
  padding: 0 4px 0 22px;
  border-radius: 28px;
  background: #3c434a;
}

.url {
  flex: 1;
  margin-left: 18px;
  padding: 0;
  border: 0;
  outline: 0;
  font: 28px/36px Inter, "Liberation Sans", sans-serif;
  color: transparent;
  background: linear-gradient(90deg, #fff 122px, #a8adb0 122px);
  background-clip: text;
}

.avatar { width: 44px; margin: 0 10px; border-radius: 50%; background: #9c4bb5; color: #fff; font-size: 22px; }

/* Web page */
.page { flex: 1; display: flex; flex-direction: column; background: #fff; }

.site-nav {
  display: flex;
  align-items: center;
  height: 101px;
  padding: 0 29px;
  color: #fff;
  background: linear-gradient(#6cb1e7, #4a98de);
  text-shadow: 0 1px 2px rgba(0, 0, 0, .15);
}

.brand { width: 767px; font-size: 33px; font-weight: 500; white-space: nowrap; }
.site-menu { display: flex; color: #dbeafa; font-size: 27px; }
.site-menu a { padding: 0 73px; line-height: 72px; border-left: 2px solid #a9d0f2; }
.account { display: flex; align-items: center; gap: 28px; margin-left: auto; }

.signin {
  width: 136px;
  height: 70px;
  border: 1px solid #d5d9dd;
  border-radius: 7px;
  color: #464c52;
  background: linear-gradient(#fff, #dcdfe3);
}

.content { flex: 1; width: 100%; max-width: 1998px; margin: 0 auto; padding-top: 68px; }

.content h1 {
  margin: 0 0 30px;
  padding-bottom: 22px;
  border-bottom: 2px solid #e5e5e5;
  font-size: 47px;
  line-height: 72px;
  font-weight: 500;
  color: #549fdf;
}

.content p { margin: 0 0 43px; font-size: 27px; line-height: 43px; }
.content p a { color: #549fdf; }

.site-footer {
  display: flex;
  justify-content: space-between;
  align-items: center;
  height: 54px;
  padding: 0 29px;
  background: #f4f4f4;
}

/* Downloads shelf */
.downloads {
  display: flex;
  align-items: center;
  justify-content: space-between;
  height: 112px;
  padding: 0 27px 0 44px;
  border-top: 2px solid #6f7f84;
  background: linear-gradient(#48565f 60%, #45505a);
}

.download { display: flex; align-items: center; width: 430px; height: 88px; border-right: 2px solid #7b878d; color: #fff; }
.filename { width: 349px; padding-left: 30px; font-size: 26px; }
.download-actions { display: flex; align-items: center; gap: 26px; }
.showall { width: 164px; height: 66px; border: 1px solid #3a4044; border-radius: 8px; font-size: 24px; font-weight: 500; color: #adc6f8; }

/* Window peeking out beneath the browser */
.behind {
  display: flex;
  align-items: flex-end;
  gap: 26px;
  height: 42px;
  margin-top: -24px;
  padding: 0 12px 6px;
  border: solid #17191a;
  border-width: 0 1px 2px;
  border-radius: 0 0 24px 24px;
  font-size: 22px;
  line-height: 22px;
  color: #25282a;
  background: #050607;
}

/* Dock */
.dockrow { display: flex; justify-content: center; margin: 2px 0 10px; }

.dock {
  display: flex;
  margin: 0;
  padding: 14px 3px 2px;
  list-style: none;
  border: 2px solid rgba(255, 255, 255, .2);
  border-radius: 30px;
  background: linear-gradient(90deg, #141312 20%, #201315 32%, #261416 45%, #351719 63%, #3a1a22 73%, #3d2a42 80%, #494163 85%, #191615 91%, #1c1416 94%, #291920);
  background-clip: padding-box;
}

.app { position: relative; display: flex; flex-direction: column; align-items: center; width: 83px; }
.app > svg { width: 64px; height: 64px; overflow: visible; }
.app::after { content: ""; width: 8px; height: 8px; margin-top: 10px; border-radius: 50%; }
.running::after { background: rgba(225, 205, 220, .7); }
.divider { width: 2px; height: 74px; margin: 0 18px; background: rgba(255, 255, 255, .25); }

.badge {
  position: absolute;
  top: -8px;
  right: -1px;
  width: 30px;
  height: 30px;
  border-radius: 50%;
  background: #e5503f;
  color: #fff;
  font-size: 20px;
  line-height: 30px;
  text-align: center;
}
```
